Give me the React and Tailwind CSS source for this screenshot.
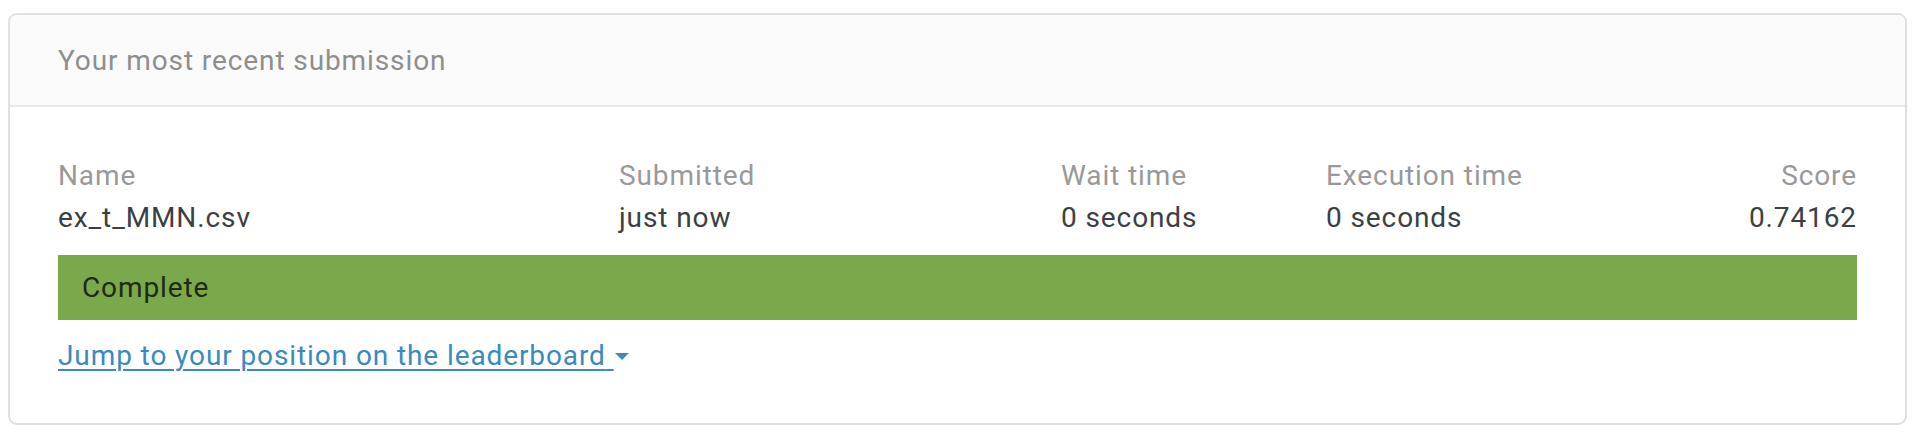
import React from "react";

const columns = [
  { label: "Name", value: "ex_t_MMN.csv", width: "w-[561px]" },
  { label: "Submitted", value: "just now", width: "w-[442px]" },
  { label: "Wait time", value: "0 seconds", width: "w-[265px]" },
  { label: "Execution time", value: "0 seconds", width: "flex-1" },
];

const App = () => {
  return (
    <div className="w-[1926px] h-[442px] bg-white pt-[13px] pl-[8px] font-['Roboto',sans-serif] tracking-[0.9px]">
      <div className="w-[1899px] h-[412px] border-2 border-[#e0e0e0] rounded-[9px] overflow-hidden">
        {/* header */}
        <div className="h-[92px] bg-[#fafafa] border-b-2 border-[#e8e8e8] flex items-center pl-[48px]">
          <h2 className="text-[28px] text-[#8e8e8e] pt-[2px]">
            Your most recent submission
          </h2>
        </div>

        {/* body */}
        <div className="px-[48px] pt-[48px] text-[28px] leading-[42px]">
          <div className="flex">
            {columns.map((col) => (
              <div key={col.label} className={col.width}>
                <div className="text-[#999999]">{col.label}</div>
                <div className="text-[#3c4043]">{col.value}</div>
              </div>
            ))}
            <div className="text-right">
              <div className="text-[#999999]">Score</div>
              <div className="text-[#3c4043]">0.74162</div>
            </div>
          </div>

          <div className="mt-[16px] h-[65px] bg-[#7ba84a] flex items-center pl-[24px] text-[#1f2a15]">
            Complete
          </div>

          <div className="mt-[15px] flex items-center text-[#3a89bf]">
            <a
              href="#leaderboard"
              className="underline underline-offset-[4px] decoration-[2px]"
            >
              Jump to your position on the leaderboard{"\u00a0"}
            </a>
            <svg width="14" height="8" viewBox="0 0 14 8" className="ml-[1px] mt-[2px]">
              <path d="M0 0 L14 0 L7 7 Z" fill="#3a89bf" />
            </svg>
          </div>
        </div>
      </div>
    </div>
  );
};

export default App;
